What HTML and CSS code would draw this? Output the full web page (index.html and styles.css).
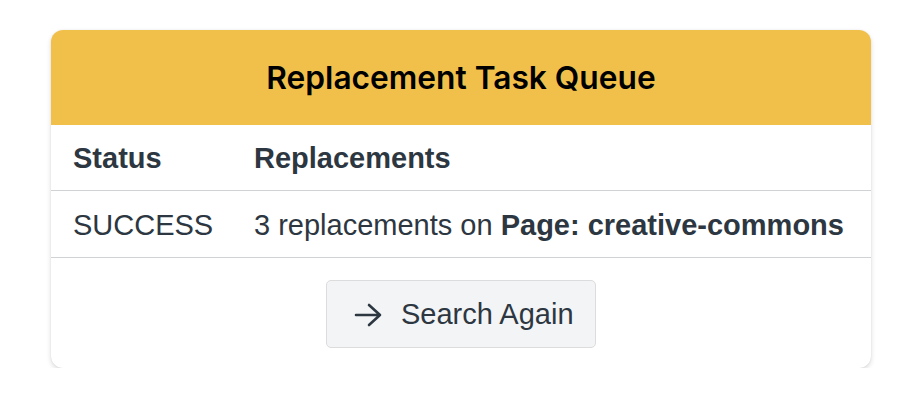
FILE: index.html
```html
<!DOCTYPE html>
<html>
<head>
<meta charset="utf-8">
<link rel="stylesheet" href="styles.css">
</head>
<body>
<div class="page">
  <div class="card">
    <div class="card-header">Replacement Task Queue</div>
    <table class="tasks">
      <colgroup><col class="col-status"><col></colgroup>
      <thead>
        <tr><th>Status</th><th>Replacements</th></tr>
      </thead>
      <tbody>
        <tr><td>SUCCESS</td><td>3 replacements on <strong>Page: creative-commons</strong></td></tr>
      </tbody>
    </table>
    <div class="card-footer">
      <button class="btn" type="button">
        <svg class="icon" viewBox="0 0 28 24" width="28" height="24" fill="none" stroke="currentColor" stroke-width="2.6" stroke-linecap="round" stroke-linejoin="round"><path d="M2 12h24M15 2l11 10-11 10"/></svg>
        <span>Search Again</span>
      </button>
    </div>
  </div>
</div>
</body>
</html>
```
FILE: styles.css
```css
* { box-sizing: border-box; }
html, body { margin: 0; padding: 0; background: #fff; }
body { font-family: "Liberation Sans", Arial, sans-serif; color: #2d3741; }
.page { padding: 30px 51px 0 51px; }
.card {
  width: 820px;
  border-radius: 12px;
  background: #fff;
  box-shadow: 0 2px 5px rgba(0,0,0,0.15), 0 0 1px rgba(0,0,0,0.12);
  overflow: hidden;
}
.card-header {
  height: 95px;
  background: #f1c04b;
  color: #000;
  display: flex;
  align-items: center;
  justify-content: center;
  font-family: Inter, "Liberation Sans", sans-serif;
  font-weight: 600;
  font-size: 31.7px;
}
.tasks { width: 100%; border-collapse: collapse; font-size: 29px; }
.col-status { width: 181px; }
.tasks th, .tasks td { text-align: left; padding: 3px 0 0 22px; }
.tasks th { height: 65px; font-weight: 700; border-bottom: 1px solid #cfd3d6; }
.tasks td { height: 67px; font-weight: 400; border-bottom: 1px solid #cfd3d6; }
.tasks td strong { font-weight: 700; }
.card-footer { display: flex; justify-content: center; padding: 22px 0 20px; }
.btn {
  display: flex; align-items: center; gap: 19px;
  width: 270px; height: 68px; padding: 2px 0 0 27px;
  background: #f3f4f5; border: 1px solid #dcdcdc; border-radius: 5px;
  font-family: "Liberation Sans", Arial, sans-serif; font-size: 29px; color: #2d3741;
}
.icon { flex: none; }
```
